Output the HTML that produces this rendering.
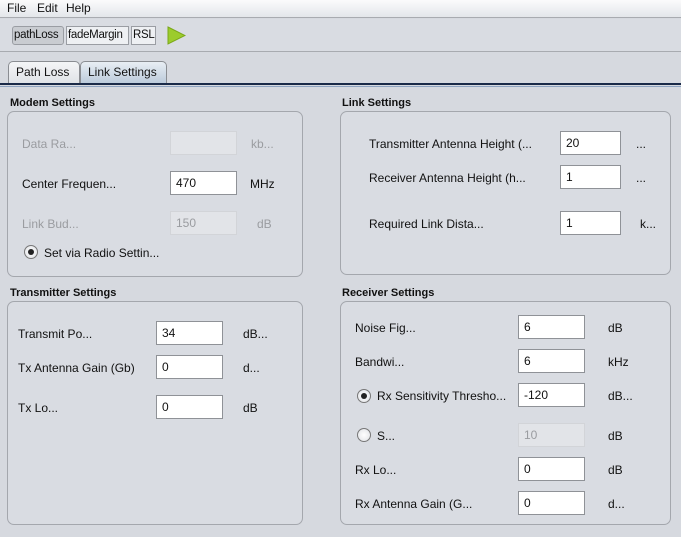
<!DOCTYPE html>
<html><head><style>
*{margin:0;padding:0;box-sizing:border-box}
body{width:681px;height:537px;background:#d6d9df;font-family:"Liberation Sans",sans-serif;font-size:12px;color:#111;position:relative;overflow:hidden}
.a{position:absolute;white-space:nowrap}
.menu{left:0;top:0;width:681px;height:18px;background:linear-gradient(#fbfbfc,#e3e6ea);border-bottom:1px solid #a8abb0}
.tb{left:0;top:19px;width:681px;height:33px;background:#d9dce2;border-bottom:1px solid #a8abb0}
.btn{top:26px;height:19px;border:1px solid #9a9da3;background:#eef0f3;padding:2px 1px;font-size:11.5px;line-height:13px;letter-spacing:-0.3px;overflow:hidden}
.tab{top:61px;height:22px;border:1px solid #8a8d92;border-bottom:none;border-radius:5px 5px 0 0;padding:4px 7px;line-height:13px}
.box{border:1px solid #a4a7ad;border-radius:7px;background:#d9dce2}
.t{font-weight:bold;font-size:11px}
.in{height:24px;border:1px solid #8f9297;background:#fff;padding:4px 5px;line-height:14px}
.dis{background:#e2e4e8;border-color:#d2d4d8;color:#9a9ca0}
.g{color:#9a9ca0}
.rad{width:14px;height:14px;border:1px solid #777;border-radius:50%;background:radial-gradient(#fff,#dfe1e5)}
.rad.on::after{content:"";position:absolute;left:3px;top:3px;width:6px;height:6px;border-radius:50%;background:#222}
</style></head><body>
<div class="a menu"></div>
<div class="a" style="left:7px;top:1px">File</div>
<div class="a" style="left:37px;top:1px">Edit</div>
<div class="a" style="left:66px;top:1px">Help</div>
<div class="a tb"></div>
<div class="a btn" style="left:12px;width:52px;background:#c9ccd1;border-radius:3px">pathLoss</div>
<div class="a btn" style="left:66px;width:63px">fadeMargin</div>
<div class="a btn" style="left:131px;width:25px">RSL</div>
<svg class="a" style="left:166px;top:26px" width="20" height="19"><polygon points="2,1 19,9.5 2,18" fill="#9ccc2c" stroke="#7aa818"/></svg>
<div class="a tab" style="left:8px;width:72px;background:linear-gradient(#f4f5f7,#e0e3e7)">Path Loss</div>
<div class="a tab" style="left:80px;width:87px;background:linear-gradient(#e8eef4,#bccbdb)">Link Settings</div>
<div class="a" style="left:0;top:83px;width:681px;height:2px;background:#1a2a48"></div>
<div class="a" style="left:0;top:86px;width:681px;height:1px;background:#8ea3c0"></div>

<div class="a t" style="left:10px;top:97px">Modem Settings</div>
<div class="a box" style="left:7px;top:111px;width:296px;height:166px"></div>
<div class="a g" style="left:22px;top:137px">Data Ra...</div>
<div class="a in dis" style="left:170px;top:131px;width:67px"></div>
<div class="a g" style="left:251px;top:137px">kb...</div>
<div class="a" style="left:22px;top:177px">Center Frequen...</div>
<div class="a in" style="left:170px;top:171px;width:67px">470</div>
<div class="a" style="left:250px;top:177px">MHz</div>
<div class="a g" style="left:22px;top:217px">Link Bud...</div>
<div class="a in dis" style="left:170px;top:211px;width:67px">150</div>
<div class="a g" style="left:257px;top:217px">dB</div>
<div class="a rad on" style="left:24px;top:245px"></div>
<div class="a" style="left:44px;top:246px">Set via Radio Settin...</div>

<div class="a t" style="left:342px;top:97px">Link Settings</div>
<div class="a box" style="left:340px;top:111px;width:331px;height:164px"></div>
<div class="a" style="left:369px;top:137px">Transmitter Antenna Height (...</div>
<div class="a in" style="left:560px;top:131px;width:61px">20</div>
<div class="a" style="left:636px;top:137px">...</div>
<div class="a" style="left:369px;top:171px">Receiver Antenna Height (h...</div>
<div class="a in" style="left:560px;top:165px;width:61px">1</div>
<div class="a" style="left:636px;top:171px">...</div>
<div class="a" style="left:369px;top:217px">Required Link Dista...</div>
<div class="a in" style="left:560px;top:211px;width:61px">1</div>
<div class="a" style="left:640px;top:217px">k...</div>

<div class="a t" style="left:10px;top:287px">Transmitter Settings</div>
<div class="a box" style="left:7px;top:301px;width:296px;height:224px"></div>
<div class="a" style="left:18px;top:327px">Transmit Po...</div>
<div class="a in" style="left:156px;top:321px;width:67px">34</div>
<div class="a" style="left:243px;top:327px">dB...</div>
<div class="a" style="left:18px;top:361px">Tx Antenna Gain (Gb)</div>
<div class="a in" style="left:156px;top:355px;width:67px">0</div>
<div class="a" style="left:243px;top:361px">d...</div>
<div class="a" style="left:18px;top:401px">Tx Lo...</div>
<div class="a in" style="left:156px;top:395px;width:67px">0</div>
<div class="a" style="left:243px;top:401px">dB</div>

<div class="a t" style="left:342px;top:287px">Receiver Settings</div>
<div class="a box" style="left:340px;top:301px;width:331px;height:224px"></div>
<div class="a" style="left:355px;top:321px">Noise Fig...</div>
<div class="a in" style="left:518px;top:315px;width:67px">6</div>
<div class="a" style="left:608px;top:321px">dB</div>
<div class="a" style="left:355px;top:355px">Bandwi...</div>
<div class="a in" style="left:518px;top:349px;width:67px">6</div>
<div class="a" style="left:608px;top:355px">kHz</div>
<div class="a rad on" style="left:357px;top:389px"></div>
<div class="a" style="left:377px;top:389px">Rx Sensitivity Thresho...</div>
<div class="a in" style="left:518px;top:383px;width:67px">-120</div>
<div class="a" style="left:608px;top:389px">dB...</div>
<div class="a rad" style="left:357px;top:428px"></div>
<div class="a" style="left:377px;top:429px">S...</div>
<div class="a in dis" style="left:518px;top:423px;width:67px">10</div>
<div class="a" style="left:608px;top:429px">dB</div>
<div class="a" style="left:355px;top:463px">Rx Lo...</div>
<div class="a in" style="left:518px;top:457px;width:67px">0</div>
<div class="a" style="left:608px;top:463px">dB</div>
<div class="a" style="left:355px;top:497px">Rx Antenna Gain (G...</div>
<div class="a in" style="left:518px;top:491px;width:67px">0</div>
<div class="a" style="left:608px;top:497px">d...</div>
</body></html>
